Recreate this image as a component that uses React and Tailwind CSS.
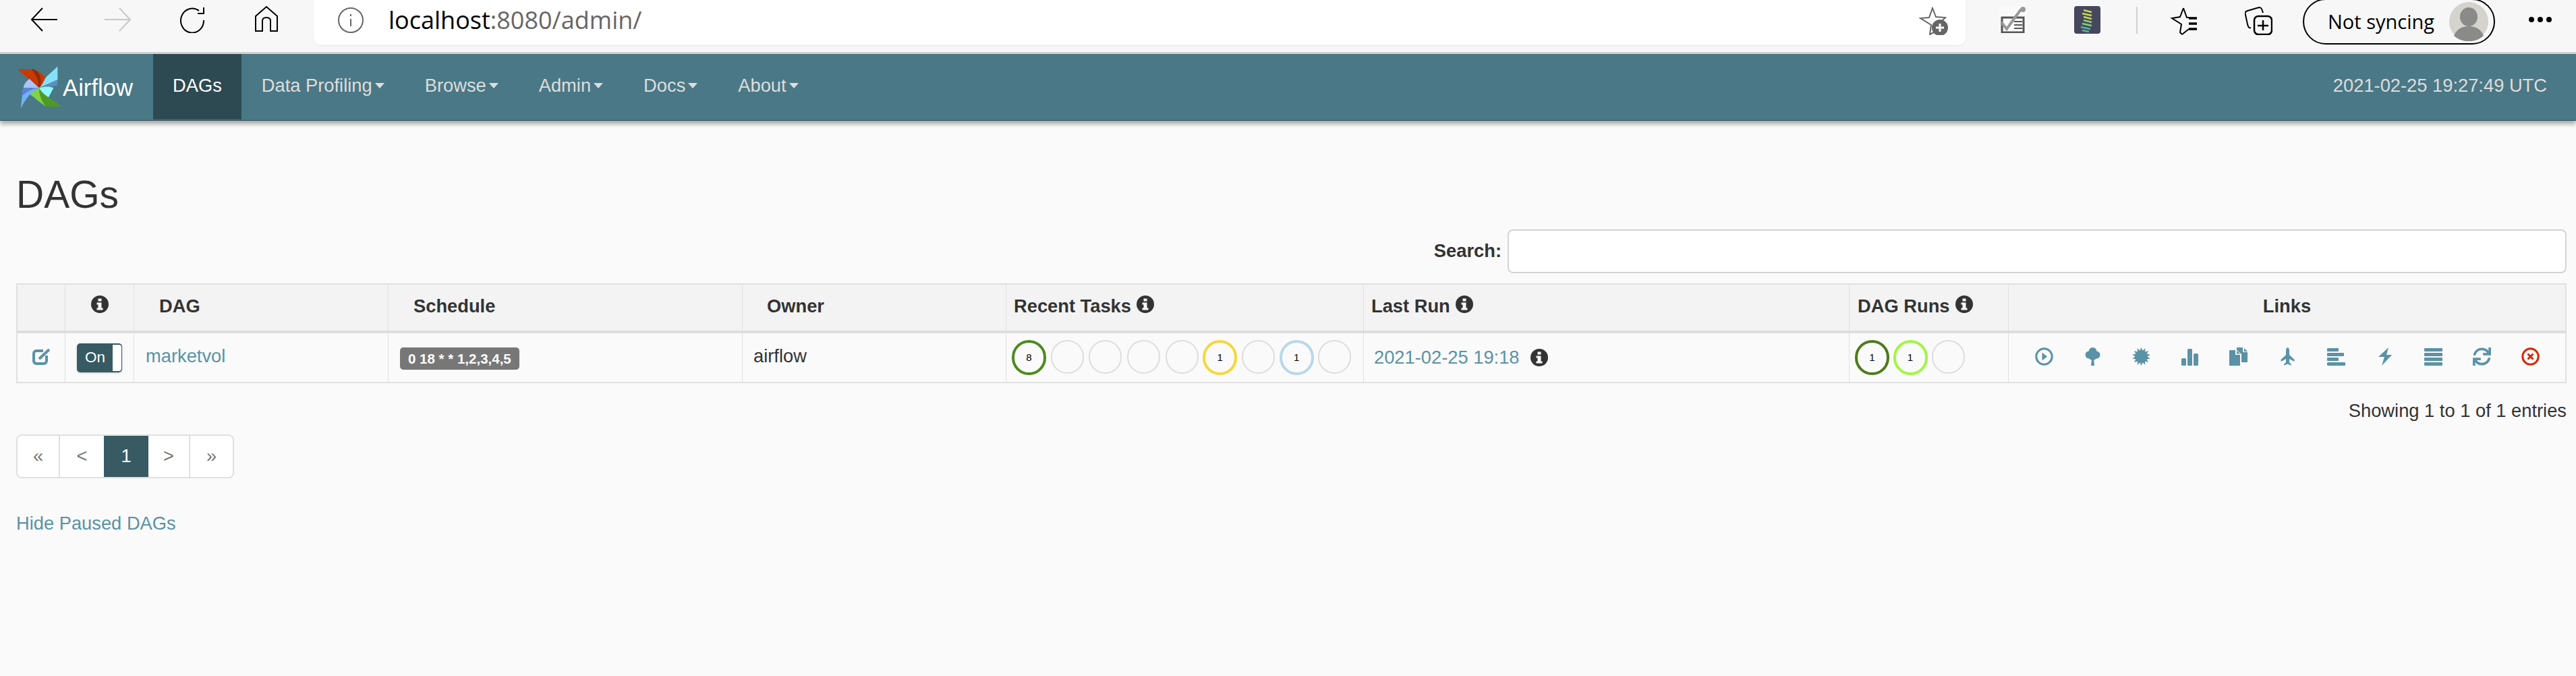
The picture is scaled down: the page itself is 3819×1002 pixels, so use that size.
import { FaSync } from "react-icons/fa";

const menus = ["Data Profiling", "Browse", "Admin", "Docs", "About"];

const taskCircles = [
  { n: "8", color: "border-[#4d8a1c]", big: true },
  {},
  {},
  {},
  {},
  { n: "1", color: "border-[#f5d838]", big: true },
  {},
  { n: "1", color: "border-[#b8d8e8]", big: true },
  {},
];

const runCircles = [
  { n: "1", color: "border-[#4f7a1c]", big: true },
  { n: "1", color: "border-[#a0f83c]", big: true },
  {},
];

function InfoIcon({ className }) {
  return (
    <svg viewBox="0 0 26 26" className={className}>
      <circle cx="13" cy="13" r="13" fill="#333" />
      <rect x="10.5" y="4.5" width="5" height="4" fill="#fafafa" />
      <path d="M8.5 10.5h7v8h2v3h-9v-3h2v-5h-2z" fill="#fafafa" />
    </svg>
  );
}

function Circle({ n, color, big }) {
  return (
    <div className="w-[56.7px] flex justify-center">
      <div
        className={
          big
            ? "w-[51px] h-[52px] rounded-full border-[4px] flex items-center justify-center text-[15px] text-black " + color
            : "w-[49px] h-[50px] rounded-full border-[2.5px] border-[#dddddd]"
        }
      >
        {n}
      </div>
    </div>
  );
}

function Certificate() {
  const points = Array.from({ length: 28 }, (_, i) => {
    const r = i % 2 === 0 ? 13.5 : 9;
    const a = (i * Math.PI) / 14;
    return `${13.5 + r * Math.sin(a)},${13.5 - r * Math.cos(a)}`;
  }).join(" ");
  return <polygon points={points} />;
}

const linkIcons = [
  <g key="play">
    <circle cx="13.5" cy="13.5" r="11.7" fill="none" stroke="#5a92a6" strokeWidth="3" />
    <path d="M10.5 7.5l7.5 6-7.5 6z" />
  </g>,
  <g key="tree">
    <circle cx="13.5" cy="6" r="6" />
    <circle cx="8" cy="11" r="5.5" />
    <circle cx="19" cy="11" r="5.5" />
    <circle cx="13.5" cy="13" r="6" />
    <path d="M12 16h3l1 11h-5z" />
  </g>,
  <Certificate key="cert" />,
  <g key="stats">
    <rect x="1" y="16" width="7" height="11" rx="1.5" />
    <rect x="10" y="2" width="7" height="25" rx="1.5" />
    <rect x="19" y="9" width="7" height="18" rx="1.5" />
  </g>,
  <g key="dup">
    <path d="M0 4h9v7h7v16H0z" />
    <path d="M11 4.5l5 5h-5z" />
    <path d="M11 0h9v7h7v15h-9V10l-7-6.5z" />
    <path d="M22 1l5 5h-5z" />
  </g>,
  <path key="plane" d="M13.5 0c1.3 0 2.5 2.5 2.5 5v6l7.5 7v3l-7.5-4v5l3 3v1.500l-5.500-2-5.500 2v-1.500l3-3v-5l-7.500 4v-3l7.500-7v-6c0-2.500 1.200-5 2.500-5z" />,
  <g key="left">
    <rect x="0" y="1" width="17" height="5" rx="1" />
    <rect x="0" y="8" width="25" height="5" rx="1" />
    <rect x="0" y="15" width="17" height="5" rx="1" />
    <rect x="0" y="22" width="27" height="5" rx="1" />
  </g>,
  <path key="flash" d="M19 0l-3 11h8L9 27l4-13H4z" />,
  <g key="justify">
    <rect x="0" y="1" width="27" height="5" rx="1" />
    <rect x="0" y="8" width="27" height="5" rx="1" />
    <rect x="0" y="15" width="27" height="5" rx="1" />
    <rect x="0" y="22" width="27" height="5" rx="1" />
  </g>,
];

function Links() {
  return (
    <div className="flex pl-4">
      {linkIcons.map((icon, i) => (
        <div key={i} className="w-[72.2px] flex justify-center">
          <svg viewBox="0 0 27 27" className="w-[27px] h-[27px] fill-[#5a92a6]">
            {icon}
          </svg>
        </div>
      ))}
      <div className="w-[72.2px] flex justify-center">
        <FaSync className="w-[27px] h-[27px] text-[#5a92a6]" />
      </div>
      <div className="w-[72.2px] flex justify-center">
        <svg viewBox="0 0 27 27" className="w-[27px] h-[27px]">
          <circle cx="13.5" cy="13.5" r="11.7" fill="none" stroke="#d92600" strokeWidth="3" />
          <path d="M9.5 9.5l8 8M17.5 9.5l-8 8" stroke="#d92600" strokeWidth="3" />
        </svg>
      </div>
    </div>
  );
}

function Logo() {
  return (
    <svg viewBox="78 84 194 191" className="w-[64px] h-[64px] shrink-0">
      <path d="M78 97h72c30 10 52 30 68 58l-44 24z" fill="#c93a02" />
      <path d="M140 97h12c28 14 34 40 28 78l-8 3c2-30-10-60-32-81z" fill="#8c2c12" />
      <path d="M258 84v60l-84 36c16-8 24-40 34-50z" fill="#84e2f8" />
      <path d="M258 143l-2 27-80 10c30-8 56-26 82-37z" fill="#5e8fc0" />
      <path d="M174 180c30-8 52-6 66 0l-24 46c-20-10-36-26-42-46z" fill="#8ff6ff" />
      <path d="M272 264h-66c-26-16-44-34-76-58l44-26c6 30 60 50 98 84z" fill="#80d24c" />
      <path d="M272 264h-66c-20-24-34-56-30-84 10 30 60 50 96 84z" fill="#4f9a22" />
      <path d="M92 275l10-90 72-5c-30 14-60 46-82 95z" fill="#6fb2fa" />
      <path d="M102 185l72-5c-30 4-50 14-76 36z" fill="#5a80e4" />
      <path d="M104 180c4-20 16-32 28-40l42 40z" fill="#a9c5fa" />
    </svg>
  );
}

function BrowserBar() {
  return (
    <div className="flex items-start h-[80px] pl-[45px] bg-[#f7f7f7] border-b-[3px] border-[#d2d2d2]">
      <svg viewBox="0 0 40 36" className="w-[40px] h-[36px] mt-[11px] fill-none stroke-black stroke-2">
        <path d="M18 1L2 18l16 17M2 18h38" />
      </svg>
      <svg viewBox="0 0 40 36" className="w-[40px] h-[36px] mt-[11px] ml-[70px] fill-none stroke-[#c8c8c8] stroke-2">
        <path d="M22 1l16 17-16 17M38 18H0" />
      </svg>
      <svg viewBox="0 0 40 40" className="w-[40px] h-[40px] mt-[9px] ml-[70px] fill-none stroke-black stroke-2">
        <path d="M30 7A17 18 0 1 0 37 21M37 2v9H28" />
      </svg>
      <svg viewBox="0 0 36 38" className="w-[36px] h-[38px] mt-[9px] ml-[72px] fill-none stroke-black stroke-2">
        <path d="M18 1L2 15v22h10V22c0-3 2-5 6-5s6 2 6 5v15h10V15z" />
      </svg>
      <div className="flex items-center h-[67px] w-[2449px] ml-[52px] bg-white rounded-b-[10px] pl-[35px] pr-[26px] shadow-[0_1px_2px_#e4e4e4]">
        <svg viewBox="0 0 40 40" className="w-[40px] h-[40px] -mt-[8px] fill-none stroke-[#666] stroke-2">
          <circle cx="20" cy="20" r="18" />
          <path d="M20 18v11M20 11v3" />
        </svg>
        <div className="ml-[36px] -mt-[7px] text-[36px] font-['Open_Sans',sans-serif] text-[#666]">
          <span className="text-black">localhost</span>:8080/admin/
        </div>
        <svg viewBox="0 0 43 42" className="ml-auto -mt-[5px] w-[43px] h-[42px] fill-none stroke-[#666] stroke-2">
          <path d="M20 2l5 13 14 1-9 9 3 9-13 5-4 2 2-14L2 17l13-1z" />
          <circle cx="31" cy="31" r="11" fill="#666" />
          <path d="M31 25v12M25 31h12" stroke="#fff" strokeWidth="3" />
        </svg>
      </div>
      <svg viewBox="0 0 41 40" className="ml-[50px] mt-[9px] w-[41px] h-[40px]">
        <rect width="41" height="40" fill="#fafafa" />
        <path d="M4 17h32v22H4z" fill="none" stroke="#555" strokeWidth="3" />
        <path d="M3 24l8 10L32 5" fill="none" stroke="#999" strokeWidth="4" />
        <circle cx="35" cy="5" r="4" fill="#999" />
        <path d="M22 23h12M22 28h12M22 33h12" stroke="#555" strokeWidth="2" />
      </svg>
      <svg viewBox="0 0 39 41" className="ml-[70px] mt-[9px] w-[39px] h-[41px]">
        <rect width="39" height="41" rx="4" fill="#45475f" />
        <path d="M14 6l12 3M12 11l14 3M14 16l12 3" stroke="#c9d84a" strokeWidth="2.5" />
        <path d="M14 21l12 3M12 26l14 3" stroke="#8ccf7a" strokeWidth="2.5" />
        <path d="M10 31l14 3M12 36l10 2" stroke="#5fb09a" strokeWidth="2.5" />
      </svg>
      <div className="ml-[53px] mt-[10px] w-[2px] h-[40px] bg-[#d0d0d0]" />
      <svg viewBox="0 0 41 42" className="ml-[48px] mt-[10px] w-[41px] h-[42px] fill-none stroke-black stroke-2">
        <path d="M20 2l5 14h4M18 41l-3-3 2-12L3 17l12-2L20 2M18 41l10-8" />
        <path d="M28 17h12M28 25h12M28 33h12" strokeWidth="3.5" />
      </svg>
      <svg viewBox="0 0 41 42" className="ml-[70px] mt-[10px] w-[41px] h-[42px] fill-none stroke-black stroke-2">
        <path d="M9 31C6 32 5 30 4 26L1 12c-1-4 0-5 3-6l17-5c3 0 4 1 5 5l1 3" />
        <rect x="14" y="14" width="26" height="27" rx="6" strokeWidth="2.5" />
        <path d="M27 20v15M19 28h16" strokeWidth="2.5" />
      </svg>
      <div className="flex items-center ml-[45px] -mt-[2px] w-[285px] h-[68px] rounded-[34px] border-[2.5px] border-black pl-[35px]">
        <div className="text-[29px] text-black font-['Open_Sans',sans-serif] w-[180px] whitespace-nowrap">Not syncing</div>
        <svg viewBox="0 0 58 58" className="w-[58px] h-[58px] shrink-0">
          <circle cx="29" cy="29" r="29" fill="#d4d3cd" />
          <ellipse cx="29" cy="22" rx="13" ry="14" fill="#8a8a88" />
          <path d="M7 50c4-10 12-14 22-14s18 4 22 14c-12 11-32 11-44 0z" fill="#8a8a88" />
        </svg>
      </div>
      <div className="flex gap-[5px] ml-[50px] mt-[25px]">
        <div className="w-[8px] h-[8px] rounded-full bg-black" />
        <div className="w-[8px] h-[8px] rounded-full bg-black" />
        <div className="w-[8px] h-[8px] rounded-full bg-black" />
      </div>
    </div>
  );
}

function Navbar() {
  return (
    <div className="relative flex h-[99px] bg-[#4a7886] border-b border-[#2f4d57] shadow-[0_5px_6px_#aaaaaa] text-[27.3px] text-[#dddddd]">
      <div className="flex items-center w-[227px] pl-[26px] pt-[2px] shrink-0">
        <Logo />
        <span className="ml-[3px] text-[34.7px] text-white">Airflow</span>
      </div>
      <div className="flex items-center h-[97px] px-[29px] pb-[3px] bg-[#2d4a53] text-white">DAGs</div>
      {menus.map((m) => (
        <div key={m} className="flex items-center h-[97px] px-[30px] pb-[3px]">
          {m}
          <div className="ml-[4px] w-0 h-0 border-x-[7.5px] border-t-[8px] border-x-transparent border-t-[#dddddd]" />
        </div>
      ))}
      <div className="ml-auto flex items-center h-[97px] pr-[43px] pb-[3px]">2021-02-25 19:27:49 UTC</div>
    </div>
  );
}

function DagTable() {
  const th = "h-[74px] border-t-2 border-b-[4px] border-r border-t-[#e0e0e0] border-b-[#dddddd] border-r-[#e0e0e0] bg-[#f3f3f3] font-bold align-middle pb-[4px] whitespace-nowrap";
  const td = "h-[74px] border-b-2 border-r border-[#e0e0e0] align-middle p-0";
  return (
    <table className="table-fixed border-separate border-spacing-0 w-[3781px] mt-[15px] text-left">
      <colgroup>
        <col className="w-[73px]" />
        <col className="w-[102px]" />
        <col className="w-[377px]" />
        <col className="w-[525px]" />
        <col className="w-[391px]" />
        <col className="w-[530px]" />
        <col className="w-[720px]" />
        <col className="w-[236px]" />
        <col className="w-[827px]" />
      </colgroup>
      <thead>
        <tr>
          <th className={th + " border-l-2 border-l-[#e0e0e0]"}></th>
          <th className={th}>
            <InfoIcon className="w-[26px] h-[26px] mx-auto -translate-y-[3px]" />
          </th>
          <th className={th + " pl-[37px]"}>DAG</th>
          <th className={th + " pl-[37px]"}>Schedule</th>
          <th className={th + " pl-[36px]"}>Owner</th>
          <th className={th + " pl-[11px]"}>
            <span className="flex items-center gap-[8px]">
              Recent Tasks <InfoIcon className="w-[26px] h-[26px] -translate-y-[3px]" />
            </span>
          </th>
          <th className={th + " pl-[11px]"}>
            <span className="flex items-center gap-[8px]">
              Last Run <InfoIcon className="w-[26px] h-[26px] -translate-y-[3px]" />
            </span>
          </th>
          <th className={th + " pl-[12px]"}>
            <span className="flex items-center gap-[8px]">
              DAG Runs <InfoIcon className="w-[26px] h-[26px] -translate-y-[3px]" />
            </span>
          </th>
          <th className={th + " !text-center border-r-2"}>Links</th>
        </tr>
      </thead>
      <tbody>
        <tr>
          <td className={td + " border-l-2"}>
            <svg viewBox="0 0 28 25" className="w-[28px] h-[25px] ml-[22px] -mt-[4px] fill-none stroke-[#5a92a6] stroke-[4]">
              <path d="M16 4H6a4 4 0 0 0-4 4v11a4 4 0 0 0 4 4h11a4 4 0 0 0 4-4v-8" />
              <path d="M10 16L25 2" />
            </svg>
          </td>
          <td className={td}>
            <div className="flex items-center ml-[17px] w-[67px] h-[43px] rounded-[5px] bg-[#375a63] shadow-[0_1px_3px_#cccccc] text-[22.5px] text-white pl-[12px] pr-[1px]">
              On
              <div className="ml-auto w-[13px] h-[39px] rounded-r-[4px] bg-white" />
            </div>
          </td>
          <td className={td + " pl-[17px] pb-[4px] text-[#5a92a6]"}>marketvol</td>
          <td className={td + " pl-[17px]"}>
            <span className="inline-flex items-center h-[33px] px-[12px] rounded-[5px] bg-[#777777] text-white font-bold text-[20.5px] whitespace-nowrap">
              0 18 * * 1,2,3,4,5
            </span>
          </td>
          <td className={td + " pl-[16px] pb-[4px]"}>airflow</td>
          <td className={td}>
            <div className="flex pl-[5px]">
              {taskCircles.map((c, i) => (
                <Circle key={i} {...c} />
              ))}
            </div>
          </td>
          <td className={td + " pl-[15px]"}>
            <span className="flex items-center gap-[16px] text-[#5a92a6]">
              2021-02-25 19:18
              <InfoIcon className="w-[26px] h-[26px]" />
            </span>
          </td>
          <td className={td}>
            <div className="flex pl-[5px]">
              {runCircles.map((c, i) => (
                <Circle key={i} {...c} />
              ))}
            </div>
          </td>
          <td className={td + " border-r-2 pb-[4px]"}>
            <Links />
          </td>
        </tr>
      </tbody>
    </table>
  );
}

function Pagination() {
  const cell = "flex items-center justify-center h-full";
  return (
    <div className="flex w-[323px] h-[65px] mt-[20px] bg-white border-2 border-[#e0e0e0] rounded-[8px] text-[#777777] overflow-hidden">
      <div className={cell + " w-[63px] border-r-2 border-[#e0e0e0]"}>«</div>
      <div className={cell + " w-[65px]"}>&lt;</div>
      <div className={cell + " w-[66px] bg-[#375a63] text-white"}>1</div>
      <div className={cell + " w-[62px] border-r-2 border-[#e0e0e0]"}>&gt;</div>
      <div className={cell + " flex-1"}>»</div>
    </div>
  );
}

export default function App() {
  return (
    <div className="h-screen overflow-hidden bg-[#fafafa] text-[#333333] text-[27.3px] font-['Liberation_Sans',Arial,sans-serif]">
      <BrowserBar />
      <Navbar />
      <div className="pl-[24px] pr-[14px] pt-[74px]">
        <h1 className="h-[70px] flex items-center text-[57px] leading-none">DAGs</h1>
        <div className="flex items-center justify-end gap-[9px] mt-[17px]">
          <span className="font-bold">Search:</span>
          <div className="w-[1570px] h-[65px] bg-white border-2 border-[#d4d4d4] rounded-[8px]" />
        </div>
        <DagTable />
        <div className="text-right mt-[26px] h-[30px] leading-[30px]">Showing 1 to 1 of 1 entries</div>
        <Pagination />
        <div className="mt-[47px] text-[#5a92a6]">Hide Paused DAGs</div>
      </div>
    </div>
  );
}
